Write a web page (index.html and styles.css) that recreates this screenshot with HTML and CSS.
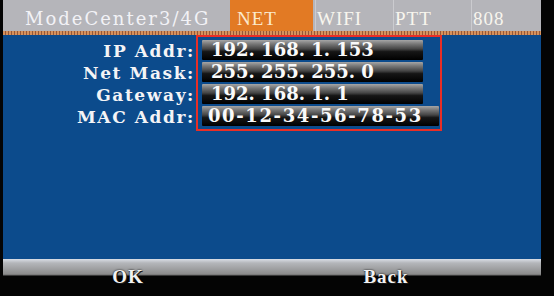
FILE: index.html
```html
<!DOCTYPE html>
<html>
<head>
  <meta charset="UTF-8">
  <title>NET</title>
  <link rel="stylesheet" href="styles.css">
</head>
<body>
  <div class="screen">
    <div class="topbar">
      <div class="title">ModeCenter3/4G</div>
      <div class="tab active">NET</div>
      <div class="tab">WIFI</div>
      <div class="tab">PTT</div>
      <div class="tab last">808</div>
    </div>
    <div class="stripe"></div>

    <div class="main">
      <div class="labels">
        <div class="label">IP Addr:</div>
        <div class="label">Net Mask:</div>
        <div class="label">Gateway:</div>
        <div class="label">MAC Addr:</div>
      </div>
      <div class="fields">
        <div class="field">192. 168. 1. 153</div>
        <div class="field">255. 255. 255. 0</div>
        <div class="field">192. 168. 1. 1</div>
        <div class="field wide">00-12-34-56-78-53</div>
      </div>
    </div>

    <div class="softkeys">
      <span class="key key-ok">OK</span>
      <span class="key key-back">Back</span>
    </div>
  </div>
</body>
</html>
```

FILE: styles.css
```css
body {
  margin: 0;
  width: 554px;
  height: 296px;
  overflow: hidden;
  background-color: #040404;
}
.screen {
  margin-left: 3px;
  width: 538px;
  height: 296px;
  display: flex;
  flex-direction: column;
}
.topbar {
  height: 31px;
  display: flex;
  background-color: #b5b5ba;
}
.title {
  width: 227px;
  box-sizing: border-box;
  padding: 6px 0 0 22px;
  line-height: 25px;
  font-family: "DejaVu Serif", serif;
  font-size: 18px;
  letter-spacing: 2px;
  color: #f2f2f6;
}
.tab {
  width: 76px;
  margin-left: 2px;
  box-sizing: border-box;
  padding: 6px 0 0 1px;
  line-height: 25px;
  border-left: 1px solid rgba(255,255,255,0.3);
  font-family: "Liberation Serif", serif;
  font-size: 19px;
  letter-spacing: 1px;
  color: #f8f5ee;
}
.tab.active {
  width: 83px;
  margin-left: 0;
  padding-left: 7px;
  border-left: none;
  background-color: #e27a24;
  color: #fbe9cc;
}
.tab.last {
  flex: 1;
}
.stripe {
  height: 4px;
  background: repeating-linear-gradient(90deg, #d8925c 0 2px, #95583a 2px 3px);
}
.main {
  flex: 1;
  display: flex;
  align-items: flex-start;
  background-color: #0c4b8c;
}
.labels {
  width: 191px;
  margin-right: 2px;
  padding-top: 6px;
  display: flex;
  flex-direction: column;
  gap: 2px;
}
.label {
  height: 20px;
  line-height: 20px;
  text-align: right;
  font-family: "DejaVu Serif", serif;
  font-weight: bold;
  font-size: 17px;
  letter-spacing: 1.6px;
  margin-right: -1px;
  color: #f4f4f6;
}
.fields {
  width: 246px;
  box-sizing: border-box;
  border: 2px solid #ea2e26;
  padding: 3px 1px 3px 4px;
  display: flex;
  flex-direction: column;
  gap: 2px;
}
.field {
  width: 221px;
  height: 20px;
  box-sizing: border-box;
  padding-left: 9px;
  line-height: 20px;
  white-space: nowrap;
  border-radius: 1px;
  background: linear-gradient(to bottom, #a6a6a6 0%, #777 20%, #444 45%, #161616 58%, #000 100%);
  font-family: "DejaVu Serif", serif;
  font-weight: bold;
  font-size: 18px;
  color: #fafafa;
}
.field.wide {
  width: 237px;
  padding-left: 6px;
  letter-spacing: 1.6px;
}
.softkeys {
  height: 37px;
  box-sizing: border-box;
  padding-top: 8px;
  display: flex;
  background: linear-gradient(to bottom, #dadee6 0, #b4b6ba 4px, #8c8c8c 15px, #6e6e6e 16px, #040404 17px);
}
.key {
  line-height: 20px;
  text-align: center;
  font-family: "Liberation Serif", serif;
  font-weight: bold;
  font-size: 19px;
  letter-spacing: 1px;
  color: #f2f2f2;
  text-shadow: 0 0 2px #000, 1px 1px 0 #222;
}
.key-ok {
  width: 250px;
}
.key-back {
  width: 266px;
}
```
